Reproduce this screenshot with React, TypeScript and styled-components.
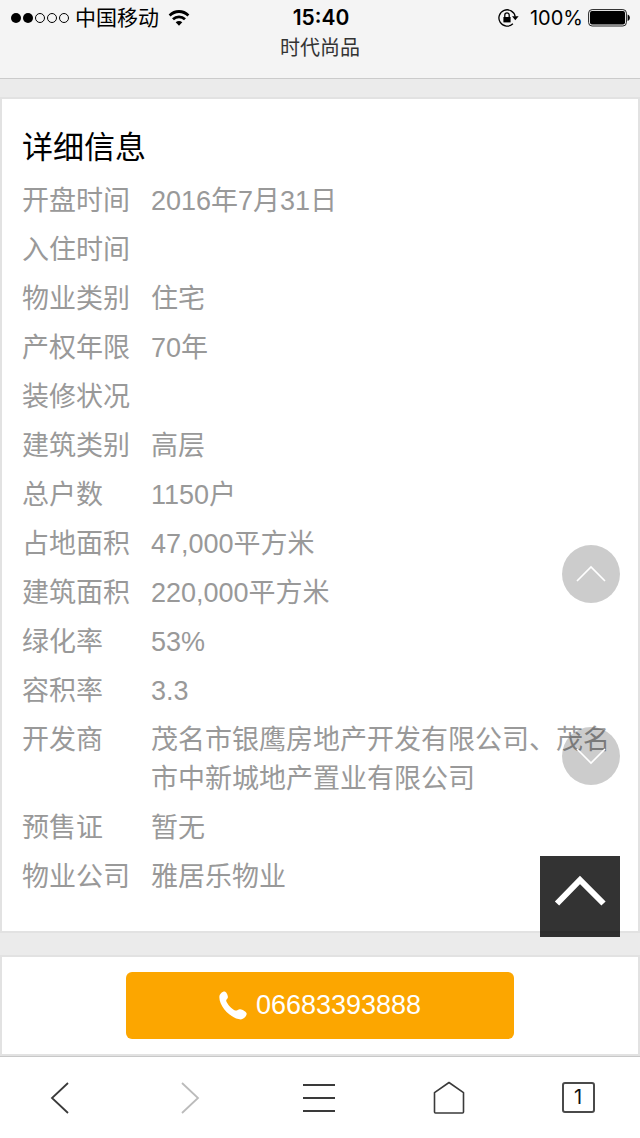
import React from "react";
import styled, { createGlobalStyle } from "styled-components";

const Global = createGlobalStyle`
  * { box-sizing: border-box; }
  body {
    margin: 0;
    background: #ebebeb;
    font-family: "Liberation Sans", "Noto Sans CJK SC", sans-serif;
  }
  button { font: inherit; border: 0; margin: 0; padding: 0; background: none; cursor: pointer; }
`;

const Page = styled.div`
  min-height: 100vh;
  display: flex;
  flex-direction: column;
`;

const Header = styled.header`
  height: 79px;
  background: #f4f4f4;
  border-bottom: 1px solid #cbcbcb;
`;

const StatusBar = styled.div`
  display: grid;
  grid-template-columns: 1fr auto 1fr;
  align-items: center;
  height: 35px;
  padding: 0 9px 0 11px;
  color: #000;
  font-family: Inter, "Noto Sans CJK SC", sans-serif;
  font-size: 20px;
  line-height: 30px;
`;

const StatusGroup = styled.div<{ $end?: boolean }>`
  display: flex;
  align-items: center;
  justify-content: ${(p) => (p.$end ? "flex-end" : "flex-start")};
`;

const Carrier = styled.span`
  margin: 0 9px 0 5px;
  font-size: 21px;
`;

const Clock = styled.time`
  font-weight: 600;
  font-size: 21px;
`;

const Percent = styled.span`
  margin: 0 5px 0 11px;
`;

const PageTitle = styled.h1`
  margin: 0;
  text-align: center;
  color: #333;
  font-size: 20px;
  font-weight: 400;
  line-height: 26px;
`;

const Main = styled.main`
  flex: 1;
  padding: 18px 0 21px;
`;

const Card = styled.section`
  background: #fff;
  border: 2px solid #e2e2e2;
  padding: 26px 20px 24px;
`;

const CardTitle = styled.h2`
  margin: 0 0 11px;
  color: #000;
  font-size: 31px;
  font-weight: 400;
  line-height: 46px;
`;

const InfoTable = styled.table`
  width: 100%;
  border-collapse: collapse;
  color: #999;
  font-size: 27px;
  line-height: 39px;
`;

const Label = styled.th`
  width: 129px;
  padding: 0 0 10px;
  text-align: left;
  vertical-align: top;
  font-weight: 400;
  white-space: nowrap;
`;

const Value = styled.td`
  padding: 0 0 10px;
  vertical-align: top;
`;

const CallBar = styled.section`
  display: flex;
  justify-content: center;
  padding: 15px 0;
  background: #fff;
  border: 2px solid #e2e2e2;
`;

const CallLink = styled.a`
  display: flex;
  align-items: center;
  justify-content: center;
  gap: 9px;
  width: 61%;
  height: 67px;
  border-radius: 6px;
  background: #fca600;
  color: #fff;
  font-size: 27px;
  text-decoration: none;
`;

const Toolbar = styled.nav`
  display: flex;
  justify-content: space-between;
  align-items: center;
  height: 82px;
  padding: 0 32px 0 30px;
  background: #fff;
  border-top: 1px solid #c8c8c8;
`;

const ToolButton = styled.button<{ $muted?: boolean }>`
  display: flex;
  align-items: center;
  justify-content: center;
  width: 60px;
  height: 60px;
  color: ${(p) => (p.$muted ? "#bbb" : "#3a3a3a")};
`;

const TabCount = styled.span`
  width: 33px;
  height: 31px;
  border: 2px solid #4a4a4a;
  border-radius: 3px;
  color: #111;
  font-family: Inter, sans-serif;
  font-size: 20px;
  line-height: 27px;
  text-align: center;
`;

const Pager = styled.div`
  position: fixed;
  right: 20px;
  bottom: 353px;
  display: flex;
  flex-direction: column;
  gap: 124px;
`;

const PagerButton = styled.button`
  display: flex;
  align-items: center;
  justify-content: center;
  width: 58px;
  height: 58px;
  border-radius: 50%;
  background: rgba(0, 0, 0, 0.2);
`;

const TopButton = styled.button`
  position: fixed;
  right: 20px;
  bottom: 201px;
  width: 80px;
  height: 81px;
  background: rgba(0, 0, 0, 0.8);
`;

const rows: [string, string][] = [
  ["开盘时间", "2016年7月31日"],
  ["入住时间", ""],
  ["物业类别", "住宅"],
  ["产权年限", "70年"],
  ["装修状况", ""],
  ["建筑类别", "高层"],
  ["总户数", "1150户"],
  ["占地面积", "47,000平方米"],
  ["建筑面积", "220,000平方米"],
  ["绿化率", "53%"],
  ["容积率", "3.3"],
  ["开发商", "茂名市银鹰房地产开发有限公司、茂名市中新城地产置业有限公司"],
  ["预售证", "暂无"],
  ["物业公司", "雅居乐物业"],
];

const Signal = () => (
  <svg width="59" height="12" viewBox="0 0 59 12" aria-hidden="true">
    {[0, 1, 2, 3, 4].map((i) => (
      <circle
        key={i}
        cx={5 + i * 12}
        cy="6"
        r={i < 2 ? 5 : 4.5}
        fill={i < 2 ? "#000" : "none"}
        stroke={i < 2 ? "none" : "#000"}
      />
    ))}
  </svg>
);

const Wifi = () => (
  <svg width="22" height="18" viewBox="0 0 22 18" fill="none" stroke="#000" strokeWidth="2.8" aria-hidden="true">
    <path d="M1.6 6.4C7 1.2 15 1.2 20.4 6.4" />
    <path d="M5 10.2C8.4 7 13.6 7 17 10.2" />
    <path d="M11 16.8 7.7 13.3C9.6 11.5 12.4 11.5 14.3 13.3Z" fill="#000" stroke="none" />
  </svg>
);

const RotationLock = () => (
  <svg width="21" height="20" viewBox="0 0 21 20" fill="none" stroke="#000" strokeWidth="1.3" aria-hidden="true">
    <path d="M14.900 15.800A8.200 8.200 0 1 1 17.200 8.600" />
    <path d="M14 8.200h6.600l-3.300 4z" fill="#000" stroke="none" />
    <path d="M5.400 9h7.200v5.400H5.400z" fill="#000" stroke="none" />
    <path d="M6.800 9V7a2.200 2.200 0 0 1 4.400 0v2" />
  </svg>
);

const Battery = () => (
  <svg width="43" height="18" viewBox="0 0 43 18" aria-hidden="true">
    <rect x="0.6" y="0.6" width="37.8" height="16.4" rx="3.5" fill="none" stroke="#222" />
    <rect x="2" y="2" width="35" height="13.6" rx="2" fill="#000" />
    <path d="M39.6 5.6c3 .6 3 5.8 0 6.4z" fill="#000" />
  </svg>
);

const Phone = () => (
  <svg width="28" height="29" viewBox="0 0 28 29" fill="#fff" aria-hidden="true">
    <path d="M.4 5.2C.8 2.500 3.600.2 5.600.4 7.400.7 9 4.200 8.900 6.200 8.800 8 6.700 8.300 7.300 10.200 8.600 13.600 12.600 17.600 16 19.400 17.900 20.200 19.200 17.900 21.200 18.200 23.600 18.700 27.600 20.600 27.700 22.800 27.600 25.200 24.600 28.300 21.800 28.400 11.800 28-.6 15.200.4 5.200Z" />
  </svg>
);

const PagerChevron = ({ down }: { down?: boolean }) => (
  <svg width="30" height="18" viewBox="0 0 30 18" fill="none" stroke="#fff" strokeWidth="1.6" aria-hidden="true">
    <path d={down ? "M1 2 15 16 29 2" : "M1 16 15 2 29 16"} />
  </svg>
);

export default function App() {
  return (
    <Page>
      <Global />
      <Header>
        <StatusBar>
          <StatusGroup>
            <Signal />
            <Carrier>中国移动</Carrier>
            <Wifi />
          </StatusGroup>
          <Clock>15:40</Clock>
          <StatusGroup $end>
            <RotationLock />
            <Percent>100%</Percent>
            <Battery />
          </StatusGroup>
        </StatusBar>
        <PageTitle>时代尚品</PageTitle>
      </Header>

      <Main>
        <Card>
          <CardTitle>详细信息</CardTitle>
          <InfoTable>
            <tbody>
              {rows.map(([label, value]) => (
                <tr key={label}>
                  <Label scope="row">{label}</Label>
                  <Value>{value}</Value>
                </tr>
              ))}
            </tbody>
          </InfoTable>
        </Card>
      </Main>

      <CallBar>
        <CallLink href="tel:06683393888">
          <Phone />
          <span>06683393888</span>
        </CallLink>
      </CallBar>

      <Toolbar>
        <ToolButton aria-label="后退">
          <svg width="20" height="34" viewBox="0 0 20 34" fill="none" stroke="currentColor" strokeWidth="1.8">
            <path d="M18 2 2 17 18 32" />
          </svg>
        </ToolButton>
        <ToolButton $muted aria-label="前进">
          <svg width="20" height="34" viewBox="0 0 20 34" fill="none" stroke="currentColor" strokeWidth="1.8">
            <path d="M2 2 18 17 2 32" />
          </svg>
        </ToolButton>
        <ToolButton aria-label="菜单">
          <svg width="32" height="30" viewBox="0 0 32 30" fill="none" stroke="currentColor" strokeWidth="1.8">
            <path d="M0 2h32M0 15h32M0 28h32" />
          </svg>
        </ToolButton>
        <ToolButton aria-label="主页">
          <svg width="32" height="34" viewBox="0 0 32 34" fill="none" stroke="currentColor" strokeWidth="1.6" strokeLinejoin="round">
            <path d="M2.500 32a1 1 0 0 1-1-1V11.600L16 1.500 30.500 11.600V31a1 1 0 0 1-1 1Z" />
          </svg>
        </ToolButton>
        <ToolButton aria-label="标签页">
          <TabCount>1</TabCount>
        </ToolButton>
      </Toolbar>

      <Pager>
        <PagerButton aria-label="上一页">
          <PagerChevron />
        </PagerButton>
        <PagerButton aria-label="下一页">
          <PagerChevron down />
        </PagerButton>
      </Pager>
      <TopButton aria-label="返回顶部">
        <svg width="80" height="80" viewBox="0 0 80 80" fill="none" stroke="#fff" strokeWidth="6">
          <path d="M17 47.500 40 24 63.500 47.500" />
        </svg>
      </TopButton>
    </Page>
  );
}
